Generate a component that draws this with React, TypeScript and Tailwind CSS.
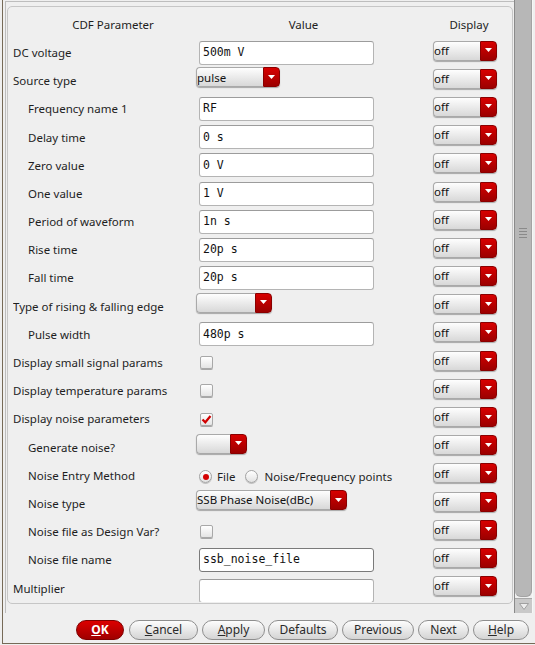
import React from "react";

type Row = {
  label: string;
  indent?: boolean;
  kind: "edit" | "combo" | "check" | "radio";
  value?: string;
  w?: string;
  checked?: boolean;
  focused?: boolean;
  extra?: string;
};

const rows: Row[] = [
  { label: "DC voltage", kind: "edit", value: "500m V" },
  { label: "Source type", kind: "combo", value: "pulse", w: "w-[84px]" },
  { label: "Frequency name 1", indent: true, kind: "edit", value: "RF" },
  { label: "Delay time", indent: true, kind: "edit", value: "0 s" },
  { label: "Zero value", indent: true, kind: "edit", value: "0 V" },
  { label: "One value", indent: true, kind: "edit", value: "1 V" },
  { label: "Period of waveform", indent: true, kind: "edit", value: "1n s" },
  { label: "Rise time", indent: true, kind: "edit", value: "20p s" },
  { label: "Fall time", indent: true, kind: "edit", value: "20p s" },
  { label: "Type of rising & falling edge", kind: "combo", value: "", w: "w-[76px]" },
  { label: "Pulse width", indent: true, kind: "edit", value: "480p s" },
  { label: "Display small signal params", kind: "check" },
  { label: "Display temperature params", kind: "check" },
  { label: "Display noise parameters", kind: "check", checked: true },
  { label: "Generate noise?", indent: true, kind: "combo", value: "", w: "w-[51px]" },
  { label: "Noise Entry Method", indent: true, kind: "radio" },
  { label: "Noise type", indent: true, kind: "combo", value: "SSB Phase Noise(dBc)", w: "w-[151px]" },
  { label: "Noise file as Design Var?", indent: true, kind: "check" },
  { label: "Noise file name", indent: true, kind: "edit", value: "ssb_noise_file", focused: true },
  { label: "Multiplier", kind: "edit", value: "", extra: "mt-[5px]" },
];

function Combo({ className, text }: { className: string; text: string }) {
  return (
    <div className={`flex h-[20px] rounded-[4px] shadow-[0_1px_1px_rgba(0,0,0,0.3)] ${className}`}>
      <div className="flex-1 flex items-center rounded-l-[4px] border border-r-0 border-[#a9a9a9] bg-gradient-to-b from-[#fefefe] to-[#d8d8d8] text-[11.5px] text-[#111] leading-none overflow-hidden whitespace-nowrap">
        {text}
      </div>
      <div className="w-[17px] flex items-center justify-center rounded-r-[4px] border border-[#8a0000] bg-gradient-to-b from-[#d80000] to-[#9c0000]">
        <svg width="7" height="4" viewBox="0 0 7 4" className="mb-[1px]">
          <path d="M0 0H7L3.5 4Z" fill="#ffffff" />
        </svg>
      </div>
    </div>
  );
}

function Check({ checked }: { checked?: boolean }) {
  return (
    <div className="ml-[4px] w-[13px] h-[13px] rounded-[2px] border border-[#a8a8a8] bg-gradient-to-b from-white to-[#e4e4e4] shadow-[0_1px_0_rgba(0,0,0,0.3)] flex items-center justify-center">
      {checked && (
        <svg width="11" height="11" viewBox="0 0 11 11">
          <path d="M1.5 5.5 L4.3 8.3 L9.5 2" stroke="#d00000" strokeWidth="2.2" fill="none" />
        </svg>
      )}
    </div>
  );
}

function Radio({ on }: { on?: boolean }) {
  return (
    <div className="w-[13px] h-[13px] rounded-full border border-[#a4a4a4] bg-gradient-to-b from-white to-[#e2e2e2] shadow-[0_1px_0_rgba(0,0,0,0.2)] flex items-center justify-center">
      {on && <div className="w-[6px] h-[6px] rounded-full bg-[#d40000]" />}
    </div>
  );
}

function Btn({ w, ml, children, red }: { w: string; ml: string; children: React.ReactNode; red?: boolean }) {
  return (
    <div
      className={`${w} ${ml} h-[20px] rounded-full flex items-center justify-center text-[12px] leading-none ${
        red
          ? "border border-[#7d0000] bg-gradient-to-b from-[#dc0000] to-[#a00000] text-white font-bold"
          : "border border-[#8e8e8e] bg-gradient-to-b from-[#fdfdfd] to-[#d4d4d4] text-[#2a2a2a]"
      }`}
    >
      {children}
    </div>
  );
}

export default function App() {
  return (
    <div className="w-[535px] h-[645px] bg-[#efefef] pl-[2px] font-['Noto_Sans','DejaVu_Sans',sans-serif] text-[#1e1e1e] overflow-hidden">
      <div className="w-[533px] h-[644px] border-l border-b border-[#766a57] flex flex-col">
        <div className="flex h-[613px] ml-[2px]">
          <div className="w-[509px] mt-[1px] border-l border-t border-[#bdbdbd]">
            <div className="ml-[1px] mt-[4px] w-[506px] h-[598px] border border-[#c6c6c6] rounded-[5px] pl-[5px] flex flex-col">
              <div className="flex items-center h-[31.5px] shrink-0 pt-[4px] text-[11.5px]">
                <div className="w-[200px] text-center">CDF Parameter</div>
                <div className="w-[181px] text-center">Value</div>
                <div className="w-[39px]" />
                <div className="w-[72px] text-center">Display</div>
              </div>
              <div className="h-[563.5px] overflow-hidden flex flex-col">
                {rows.map((r, i) => (
                  <div key={i} className="h-[28.2px] shrink-0 flex items-center text-[11.5px]">
                    <div className={`w-[183px] whitespace-nowrap ${r.indent ? "pl-[15px]" : ""}`}>{r.label}</div>
                    <div className="w-[237px] flex items-center">
                      {r.kind === "edit" && (
                        <div
                          className={`ml-[3px] w-[175px] h-[24px] rounded-[3px] bg-white flex items-center pl-[3px] font-['DejaVu_Sans_Mono',monospace] text-[11.5px] text-[#111] whitespace-pre ${
                            r.focused
                              ? "border border-[#7a7a7a]"
                              : "border border-[#b4b4b4] border-t-[#9c9c9c]"
                          } ${r.extra ?? ""}`}
                        >
                          {r.value}
                        </div>
                      )}
                      {r.kind === "combo" && <Combo className={`${r.w} mb-[7px]`} text={r.value ?? ""} />}
                      {r.kind === "check" && <Check checked={r.checked} />}
                      {r.kind === "radio" && (
                        <div className="flex items-center mt-[3px] ml-[3px]">
                          <Radio on />
                          <span className="ml-[5px]">File</span>
                          <div className="ml-[10px]">
                            <Radio />
                          </div>
                          <span className="ml-[6px] whitespace-nowrap">Noise/Frequency points</span>
                        </div>
                      )}
                    </div>
                    <Combo className="w-[64px] mb-[4px]" text="off" />
                  </div>
                ))}
              </div>
            </div>
          </div>
          <div className="w-[19px] h-[613px] flex flex-col border-l border-[#8a8a8a] border-r border-r-[#f7f7f7]">
            <div className="flex-1 bg-[#b7b7b7] rounded-b-[6px] border-r border-b border-[#a3a3a3] flex flex-col items-center justify-center">
              <div className="flex flex-col gap-[2px] mt-[-130px]">
                <div className="w-[8px] h-[1px] bg-[#8a8a8a]" />
                <div className="w-[8px] h-[1px] bg-[#8a8a8a]" />
                <div className="w-[8px] h-[1px] bg-[#8a8a8a]" />
                <div className="w-[8px] h-[1px] bg-[#8a8a8a]" />
              </div>
            </div>
            <div className="h-[15px] mt-[1px] bg-[#c9c9c9] border-t border-[#a8a8a8] flex items-center justify-center">
              <svg width="10" height="7" viewBox="0 0 10 7">
                <path d="M0.5 0.5H9.5L5 6.5Z" fill="#ededed" stroke="#a0a0a0" strokeWidth="1" />
              </svg>
            </div>
          </div>
        </div>
        <div className="flex items-start pt-[7px]">
          <Btn w="w-[48px]" ml="ml-[73px]" red>
            <u>O</u>K
          </Btn>
          <Btn w="w-[69px]" ml="ml-[5px]">
            <span><u>C</u>ancel</span>
          </Btn>
          <Btn w="w-[63px]" ml="ml-[4px]">
            <span><u>A</u>pply</span>
          </Btn>
          <Btn w="w-[70px]" ml="ml-[3px]">
            Defaults
          </Btn>
          <Btn w="w-[72px]" ml="ml-[4px]">
            Previous
          </Btn>
          <Btn w="w-[51px]" ml="ml-[4px]">
            Next
          </Btn>
          <Btn w="w-[56px]" ml="ml-[4px]">
            <span><u>H</u>elp</span>
          </Btn>
        </div>
      </div>
    </div>
  );
}
